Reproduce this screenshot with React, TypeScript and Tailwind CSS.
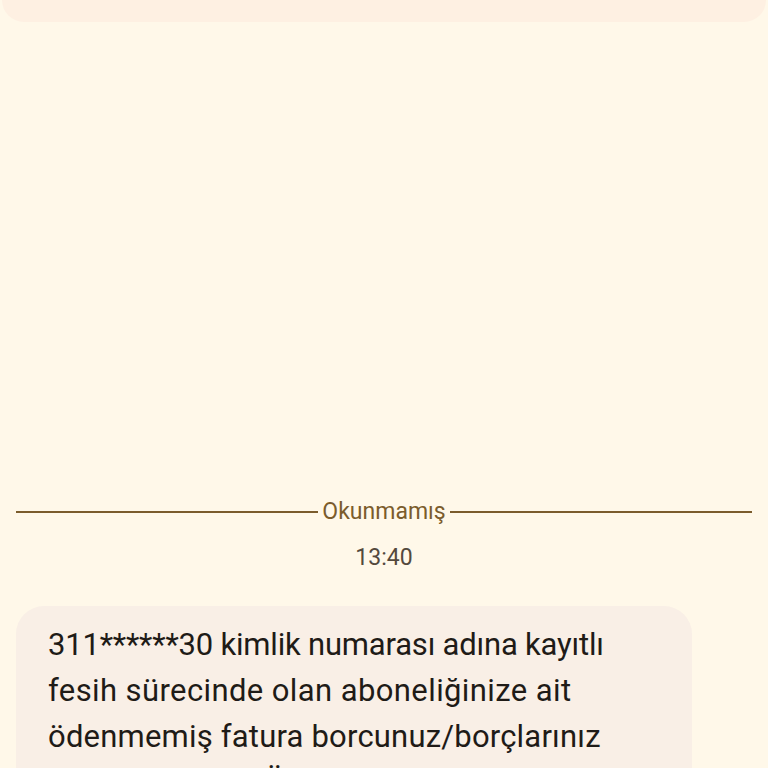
export default function App() {
  const lines = [
    { text: '311******30 kimlik numarası adına kayıtlı', cls: 'tracking-[-0.2px]' },
    { text: 'fesih sürecinde olan aboneliğinize ait', cls: 'tracking-[0.4px]' },
    { text: 'ödenmemiş fatura borcunuz/borçlarınız', cls: 'tracking-[0.2px]' },
    { text: 'bulunmaktadır. Ödeme yapmanız', cls: 'tracking-[0.2px]' },
  ];

  return (
    <div
      className="flex h-[768px] w-full flex-col overflow-hidden bg-[#fff8e9]"
      style={{ fontFamily: 'Roboto, "Noto Sans", sans-serif' }}
    >
      {/* previous message, cut off at the top */}
      <div className="mx-[2px] h-[22px] shrink-0 rounded-b-[22px] bg-[#fef0e2]" />

      <div className="mt-[476px] flex h-[28px] shrink-0 items-center gap-[4px] px-4">
        <div className="h-[2px] flex-1 bg-[#7b5c2c]" />
        <span className="text-[23px] leading-[28px] text-[#7b5c2c]">Okunmamış</span>
        <div className="h-[2px] flex-1 bg-[#7b5c2c]" />
      </div>

      <div className="mt-[18px] shrink-0 text-center text-[23px] leading-[28px] text-[#54493d]">13:40</div>

      <div className="ml-4 mt-[34px] w-[676px] shrink-0 rounded-[28px] bg-[#f9efe6] px-8 pb-6 pt-[16px]">
        {lines.map((line) => (
          <div key={line.text} className={`whitespace-nowrap text-[31px] leading-[46px] text-[#1f1b17] ${line.cls}`}>
            {line.text}
          </div>
        ))}
      </div>
    </div>
  );
}
